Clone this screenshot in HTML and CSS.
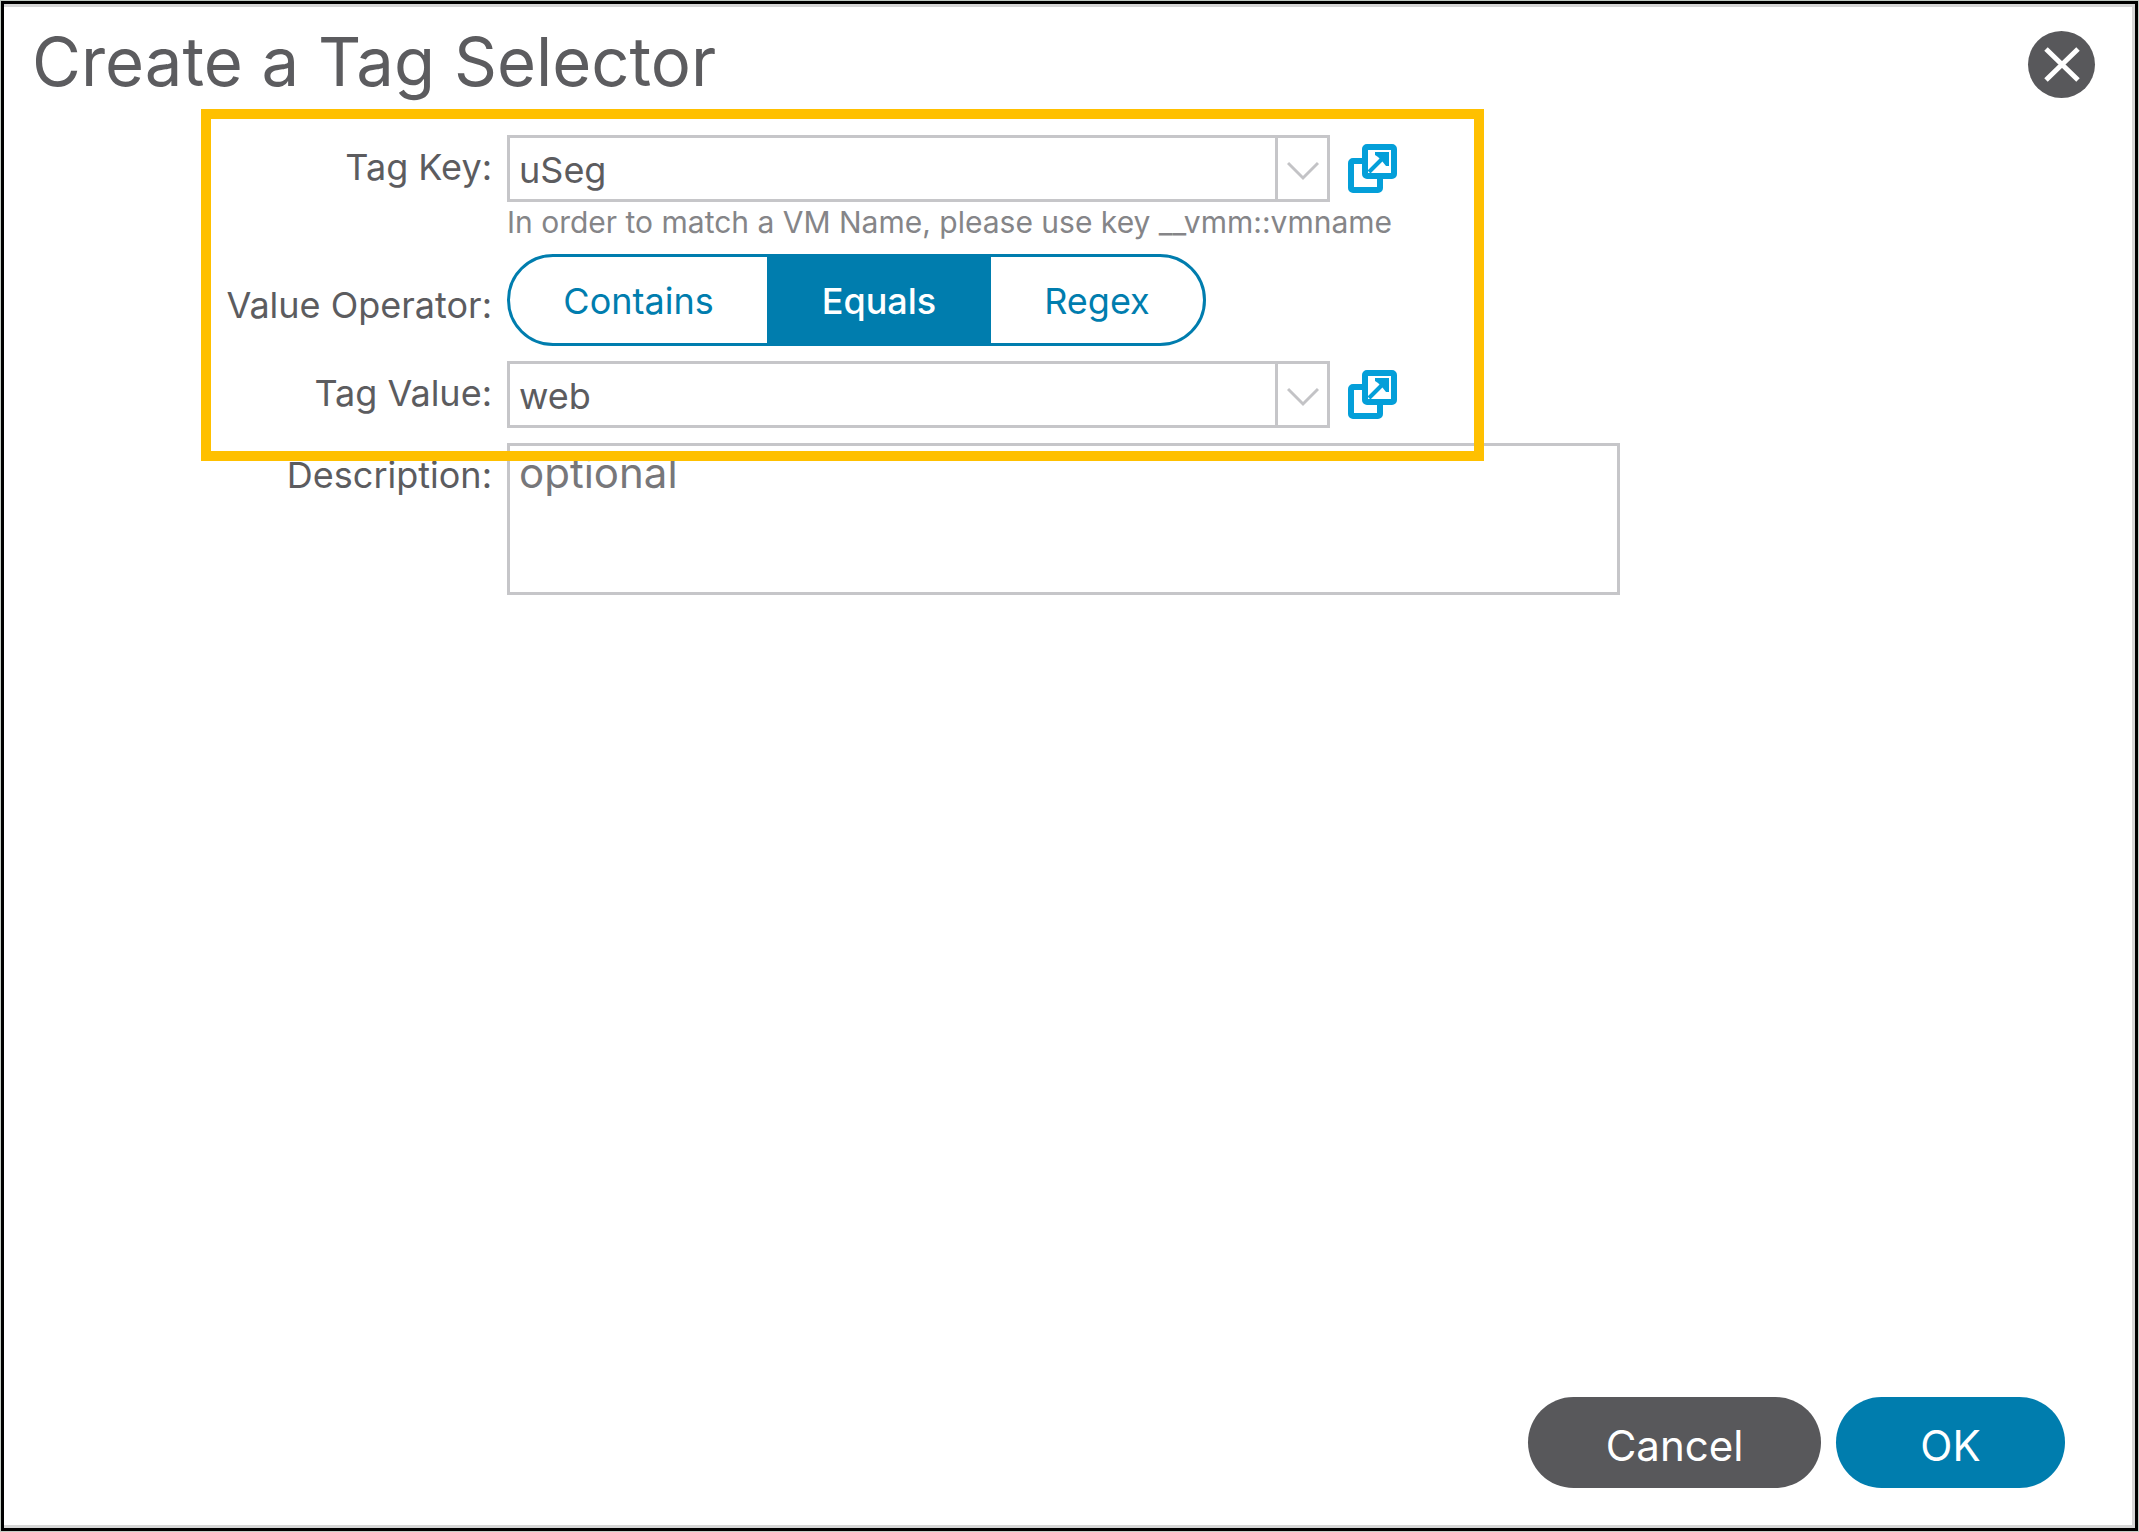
FILE: index.html
```html
<!DOCTYPE html>
<html lang="en">
<head>
<meta charset="utf-8">
<title>Create a Tag Selector</title>
<link rel="stylesheet" href="styles.css">
</head>
<body>
<main class="dialog" role="dialog" aria-labelledby="dialog-title">
  <header class="dialog-header">
    <h1 class="dialog-title" id="dialog-title">Create a Tag Selector</h1>
    <button class="close" type="button" aria-label="Close">
      <svg viewBox="0 0 67 67" aria-hidden="true"><path d="M18 18 50 49M50 18 18 49"/></svg>
    </button>
  </header>
  <form class="form">
    <div class="highlight">
      <div class="row">
        <label class="label" for="tag-key">Tag Key:</label>
        <div class="field">
          <div class="combo">
            <select class="select" id="tag-key"><option>uSeg</option></select>
            <svg class="chevron" viewBox="0 0 32 20" aria-hidden="true"><path d="M1 2 16 17 31 2"/></svg>
          </div>
          <button class="open" type="button" aria-label="Open tag key">
            <svg viewBox="0 0 49 49" aria-hidden="true"><path class="frame" d="M15 17H5a2 2 0 0 0-2 2v25a2 2 0 0 0 2 2h25a2 2 0 0 0 2-2V34"/><rect class="frame" x="17" y="3" width="29" height="29" rx="2"/><path class="arrow" d="M21 28 36 13"/><path class="head" d="M27 8h14v14h-3l-4-5-4-4-3-2z"/></svg>
          </button>
        </div>
      </div>
      <p class="hint">In order to match a VM Name, please use key __vmm::vmname</p>
      <div class="row row-operator" role="radiogroup" aria-labelledby="operator-label">
        <span class="label" id="operator-label">Value Operator:</span>
        <div class="segments">
          <label class="segment segment-contains"><input type="radio" name="operator">Contains</label>
          <label class="segment segment-equals"><input type="radio" name="operator" checked>Equals</label>
          <label class="segment segment-regex"><input type="radio" name="operator">Regex</label>
        </div>
      </div>
      <div class="row">
        <label class="label" for="tag-value">Tag Value:</label>
        <div class="field">
          <div class="combo">
            <select class="select" id="tag-value"><option>web</option></select>
            <svg class="chevron" viewBox="0 0 32 20" aria-hidden="true"><path d="M1 2 16 17 31 2"/></svg>
          </div>
          <button class="open" type="button" aria-label="Open tag value">
            <svg viewBox="0 0 49 49" aria-hidden="true"><path class="frame" d="M15 17H5a2 2 0 0 0-2 2v25a2 2 0 0 0 2 2h25a2 2 0 0 0 2-2V34"/><rect class="frame" x="17" y="3" width="29" height="29" rx="2"/><path class="arrow" d="M21 28 36 13"/><path class="head" d="M27 8h14v14h-3l-4-5-4-4-3-2z"/></svg>
          </button>
        </div>
      </div>
    </div>
    <div class="row row-description">
      <label class="label" for="description">Description:</label>
      <textarea class="textarea" id="description" placeholder="optional"></textarea>
    </div>
    <footer class="actions">
      <button class="button button-cancel" type="button">Cancel</button>
      <button class="button button-ok" type="submit">OK</button>
    </footer>
  </form>
</main>
</body>
</html>
```

FILE: styles.css
```css
* {
  box-sizing: border-box;
}

body {
  margin: 0;
  padding: 1px;
  background: #c3ccc5;
  color: #5c5c5f;
  font-family: Inter, "Liberation Sans", sans-serif;
  font-size: 36px;
}

button,
select,
textarea {
  font: inherit;
  color: inherit;
}

.dialog {
  display: flex;
  flex-direction: column;
  min-height: calc(100vh - 2px);
  border: 3px solid #000;
  background: #fff;
  box-shadow: inset -3px 0 #d6d6d6, inset 0 3px #d6d6d6, inset 0 -3px #d6d6d6;
}

.dialog-header {
  display: flex;
  justify-content: space-between;
  align-items: flex-start;
  height: 105px;
  padding: 27px 40px 0 28px;
}

.dialog-title {
  margin: 0;
  font-size: 67px;
  font-weight: 400;
  line-height: 62px;
}

.close {
  width: 67px;
  height: 67px;
  padding: 0;
  border: 0;
  border-radius: 50%;
  background: #58585b;
}

.close svg,
.open svg {
  display: block;
  width: 100%;
}

.close path {
  fill: none;
  stroke: #fff;
  stroke-width: 5;
}

.form {
  display: flex;
  flex: 1;
  flex-direction: column;
  padding: 0 70px 40px 197px;
}

.highlight {
  position: relative;
  z-index: 1;
  width: 1283px;
  max-width: 100%;
  border: 10px solid #ffc000;
  padding: 16px 0 23px;
}

.row {
  display: grid;
  grid-template-columns: 281px 1fr;
  column-gap: 15px;
}

.label {
  line-height: 64px;
  text-align: right;
}

.field {
  display: flex;
  align-items: center;
  gap: 18px;
}

.combo {
  position: relative;
  width: 823px;
}

.select {
  display: block;
  width: 100%;
  height: 67px;
  border: 3px solid #c6c6c9;
  padding: 3px 60px 0 9px;
  appearance: none;
  background: linear-gradient(#c6c6c9, #c6c6c9) right 49px top / 3px 100% no-repeat #fff;
}

.chevron {
  position: absolute;
  top: 26px;
  right: 11px;
  width: 32px;
  pointer-events: none;
}

.chevron path {
  fill: none;
  stroke: #c3c3c6;
  stroke-width: 3;
}

.open {
  width: 49px;
  padding: 0;
  border: 0;
  background: none;
}

.frame {
  fill: none;
  stroke: #049fd9;
  stroke-width: 6;
}

.arrow {
  stroke: #049fd9;
  stroke-width: 4;
}

.head {
  fill: #049fd9;
}

.hint {
  margin: 0 0 12px 296px;
  color: #858588;
  font-size: 30px;
  line-height: 40px;
  white-space: nowrap;
}

.row-operator {
  margin-bottom: 5px;
}

.row-operator .label {
  line-height: 102px;
}

.segments {
  display: flex;
  width: 699px;
  height: 92px;
  overflow: hidden;
  border: 3px solid #007dae;
  border-radius: 46px;
}

.segment {
  display: grid;
  flex: 1;
  place-items: center;
  padding-top: 2px;
  color: #007dae;
}

.segment input {
  position: absolute;
  appearance: none;
  margin: 0;
}

.segment-contains {
  flex: 257;
}

.segment-equals {
  flex: 224;
}

.segment-regex {
  flex: 212;
}

.segment:has(:checked) {
  background: #007dae;
  color: #fff;
  font-weight: 500;
}

.row-description {
  grid-template-columns: 291px minmax(0, 1113px);
  margin-top: -18px;
}

.textarea {
  display: block;
  height: 152px;
  border: 3px solid #c6c6c9;
  padding: 5px 9px;
  background: #fff;
  font-size: 42px;
  line-height: 44px;
  resize: none;
}

.textarea::placeholder {
  color: #77777a;
  opacity: 1;
}

.actions {
  display: flex;
  justify-content: flex-end;
  gap: 15px;
  margin-top: auto;
}

.button {
  height: 91px;
  border: 0;
  border-radius: 46px;
  padding: 6px 0 0;
  color: #fff;
  font-size: 42px;
}

.button-cancel {
  width: 293px;
  background: #58585b;
}

.button-ok {
  width: 229px;
  background: #007dae;
}
```
